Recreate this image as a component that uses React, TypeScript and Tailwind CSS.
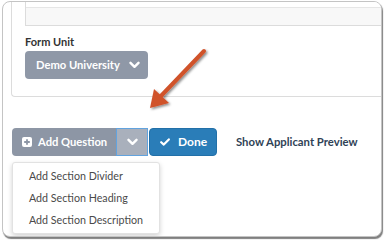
import React from 'react'

const font = { fontFamily: 'Lato, "Open Sans", Arial, sans-serif' }

function Chevron({ className = '' }: { className?: string }) {
  return (
    <svg width="11" height="8" viewBox="0 0 11 8" className={className}>
      <polyline points="1.5,1.8 5.5,5.8 9.5,1.8" fill="none" stroke="white" strokeWidth="2.4" strokeLinecap="round" strokeLinejoin="round" />
    </svg>
  )
}

function PlusSquare() {
  return (
    <svg width="10" height="10" viewBox="0 0 10 10">
      <rect x="0" y="0" width="10" height="10" rx="2" fill="white" />
      <path d="M5 2.2v5.6M2.2 5h5.6" stroke="#8d96a5" strokeWidth="1.8" />
    </svg>
  )
}

function Check() {
  return (
    <svg width="10" height="8" viewBox="0 0 10 8">
      <polyline points="1.2,4.2 3.8,6.6 8.8,1.4" fill="none" stroke="white" strokeWidth="2.2" strokeLinecap="round" strokeLinejoin="round" />
    </svg>
  )
}

export default function App() {
  const menu = ['Add Section Divider', 'Add Section Heading', 'Add Section Description']

  return (
    <div className="relative w-[384px] h-[240px] bg-white overflow-hidden" style={font}>
      <div className="ml-[2px] mt-px w-[380px] h-[236px] rounded-[8px] border border-[#c4c4c4] bg-white overflow-hidden shadow-[1px_2px_1px_rgba(0,0,0,0.5)]">
        {/* card */}
        <div className="ml-[8px] w-[420px] h-[95px] border-l border-b border-[#dcdcdc] rounded-bl-[4px] pl-[13px]">
          <div className="w-[400px] border-l border-b border-[#dcdcdc]">
            <div className="h-[5px] bg-white" />
            <div className="h-[18px] border-t border-[#e6e6e6] bg-[#f8f8f8]" />
          </div>
          <div className="mt-[9px] text-[11px] font-bold text-[#333] leading-[14px]">Form Unit</div>
          <button className="mt-[2px] flex items-center h-[28px] w-[123px] rounded-[4px] bg-[#8f98a7] pl-[11px] text-[11.2px] font-bold text-white whitespace-nowrap">
            Demo University
            <Chevron className="ml-[9px]" />
          </button>
        </div>

        {/* button row */}
        <div className="mt-[31px] ml-[9px] flex items-center">
          <div className="relative flex">
            <button className="flex items-center h-[28px] w-[104px] rounded-l-[4px] bg-[#8d96a5] pl-[10px] text-[11.2px] font-bold text-white whitespace-nowrap">
              <PlusSquare />
              <span className="ml-[6px]">Add Question</span>
            </button>
            <button className="flex items-center justify-center h-[28px] w-[32px] bg-[#a9b0bc] border border-[#62a3de]">
              <Chevron />
            </button>
            <div className="absolute left-0 top-full mt-[6px] w-[148px] py-[2px] bg-white border border-[#e2e2e2] rounded-[3px] shadow-[0_2px_5px_rgba(0,0,0,0.18)]">
              {menu.map(m => (
                <div key={m} className="h-[22px] flex items-center pl-[16px] text-[10.7px] text-[#4a4a4a] whitespace-nowrap">{m}</div>
              ))}
            </div>
          </div>
          <button className="ml-px flex items-center h-[28px] w-[68px] rounded-[4px] bg-[#2a7db8] border border-[#2270a8] pl-[10px] text-[12px] font-bold text-white">
            <Check />
            <span className="ml-[8px]">Done</span>
          </button>
          <span className="ml-[19px] text-[11.3px] font-bold text-[#2f4256] whitespace-nowrap">Show Applicant Preview</span>
        </div>
      </div>

      {/* annotation arrow */}
      <svg className="absolute left-0 top-0" width="384" height="240" viewBox="0 0 384 240">
        <defs>
          <filter id="sh" x="-20%" y="-20%" width="140%" height="140%">
            <feDropShadow dx="1.5" dy="1.5" stdDeviation="1" floodColor="#000" floodOpacity="0.45" />
          </filter>
        </defs>
        <g filter="url(#sh)">
          <line x1="204" y1="51" x2="160" y2="97" stroke="#d0522b" strokeWidth="4" strokeLinecap="round" />
          <polygon points="150,108 154,89 169,103" fill="#d0522b" />
        </g>
      </svg>
    </div>
  )
}
